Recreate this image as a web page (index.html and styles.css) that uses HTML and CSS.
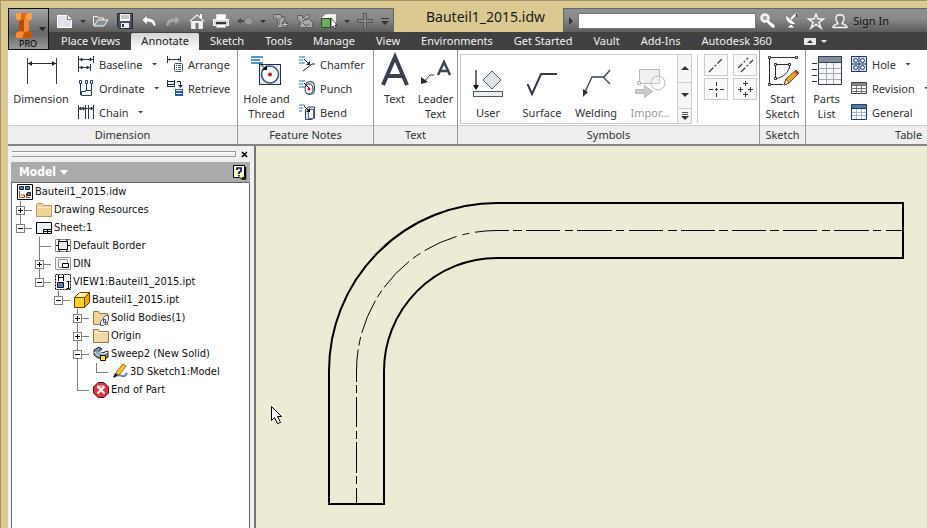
FILE: index.html
```html
<!DOCTYPE html>
<html lang="en">
<head>
<meta charset="utf-8">
<title>Bauteil1_2015.idw</title>
<link rel="stylesheet" href="styles.css">
</head>
<body>
<div class="window">
<header class="frame">
  <button class="app-button" aria-label="Application menu">
    <svg width="38" height="38" viewBox="0 0 38 38">
      <path d="M7 3h16v6l-3 2v10l3 2v5H7v-5l3-2V11L7 9z" fill="#dd6b18"/>
      <path d="M7 3h5v5l-1 3-4-2zM18 3h5v6l-4 2-3-3z" fill="#f7a14c"/>
      <path d="M10 11l5-2v12l-5 1z" fill="#b9480e"/><path d="M15 9l5 2v10l-5 1z" fill="#f08a35"/>
      <path d="M7 23l5-2 3 2-2 5H7z" fill="#f58b2d"/><path d="M15 23l4-2 4 2v5h-9z" fill="#c9540e"/>
      <path d="M30 17h7l-3.500 4z" fill="#1b2531"/>
      <text x="19" y="37" class="app-label">PRO</text>
    </svg>
  </button>
  <div class="title-row">
    <div class="quick" role="toolbar" aria-label="Quick access">
      <button aria-label="New"><svg width="16" height="16"><path d="M.5 2.500h10l4 4v8H.5z" fill="#dfe2ea" stroke="#fff"/><path d="M10.500 2.500v4h4" fill="#fff" stroke="#777"/></svg></button>
      <button class="drop" aria-label="New options"><svg width="4" height="16"><path d="M-1 7h6l-3 3z" fill="#333"/></svg></button>
      <button aria-label="Open"><svg width="16" height="16"><path d="M.5 12.500v-9h4l1 1.500h5v3" fill="#888" stroke="#eee"/><path d="M1 13l4-6h10l-4 6z" fill="#85909c" stroke="#f4f4f4"/></svg></button>
      <button aria-label="Save"><svg width="16" height="16"><path d="M.5.5h15v15h-13l-2-2z" fill="#46505f" stroke="#222b38"/><path d="M3 1h10v7H3z" fill="#f5f5f5"/><path d="M4 3h8M4 5h8" stroke="#999"/><path d="M4 10h8v5H4z" fill="#eee"/><path d="M5 11h2v3H5z" fill="#333"/></svg></button>
      <button aria-label="Undo"><svg width="16" height="16"><path d="M6 2v3c5 0 9 2 9 8h-3c0-3-2-4-6-4v3L1 7z" fill="#f8f8f8" stroke="#555" stroke-width=".5"/></svg></button>
      <button aria-label="Redo"><svg width="16" height="16"><path d="M10 2v3c-5 0-9 2-9 8h3c0-3 2-4 6-4v3l5-5z" fill="#aaa" stroke="#777" stroke-width=".5"/></svg></button>
      <button aria-label="Home"><svg width="16" height="16"><path d="M2.500 8v7.500h4V10h3v5.500h4V8" fill="#f2f2f4" stroke="#e8e8e8"/><path d="M0 8l8-7 8 7-1 1-7-6-7 6z" fill="#fff" stroke="#666" stroke-width=".4"/><path d="M11 1h2v4h-2z" fill="#fff"/><path d="M6.500 10h3v5h-3z" fill="#777"/></svg></button>
      <button aria-label="Print"><svg width="16" height="16"><path d="M3.500 1.500h9v5h-9z" fill="#fff" stroke="#ddd"/><path d="M.5 6.500h15v6H.5z" fill="#d5d7dc" stroke="#fff"/><path d="M3 9h10v2H3z" fill="#333"/><path d="M3.500 11.500h9v3h-9z" fill="#fff" stroke="#bbb"/></svg></button>
      <button aria-label="Return"><svg width="16" height="16"><path d="M0 8l4-3v2h4v2H4v2z" fill="#484848"/><circle cx="11.500" cy="8" r="4" fill="#999" stroke="#777"/></svg></button>
      <button class="drop" aria-label="Return options"><svg width="4" height="16"><path d="M-1 7h6l-3 3z" fill="#333"/></svg></button>
      <button aria-label="Update"><svg width="16" height="16" fill="#a8a8a8" stroke="#5f5f5f"><path d="M.5 1.500h7l1 2h3v4l3 2v5h-10v-7l-4-2z"/><path d="M2 4l4 3 5-4M6 12V8M8 10l4-3" fill="none"/><path d="M9 11.500h6M12 8.500v6" stroke="#555" stroke-width="3"/><path d="M9.500 11.500h5M12 9v5" stroke="#ccc"/></svg></button>
      <button aria-label="Update sheet"><svg width="16" height="16" fill="#a8a8a8" stroke="#5f5f5f"><path d="M.5 2.500h5v3l4-4 3 1-1 3 4 4v5H2.500v-7l-2-1z"/><path d="M3 12c1-4 4-5 8-6M11 6l-4 0M6 10l3 3 3-2" fill="none" stroke="#555"/></svg></button>
      <button aria-label="Select"><svg width="16" height="16"><path d="M.5 5.500l4-4h10v9l-4 4H.5z" fill="#fff" stroke="#e6e6e6"/><path d="M.5 5.500h9v9h-9z" fill="#73a967" stroke="#135d13"/><path d="M10 5v10l2-2 2 3 1-1-1-3h2z" fill="#fff" stroke="#222" stroke-width=".8"/></svg></button>
      <button class="drop" aria-label="Select options"><svg width="4" height="16"><path d="M-1 7h6l-3 3z" fill="#333"/></svg></button>
      <button aria-label="Add"><svg width="16" height="16"><path d="M6.500.5h3v6h6v3h-6v6h-3v-6h-6v-3h6z" fill="#888" stroke="#555"/></svg></button>
      <button class="more" aria-label="Customize"><svg width="8" height="16"><path d="M0 5.500h8" stroke="#333"/><path d="M0 8h8l-4 4z" fill="#333"/></svg></button>
    </div>
    <h1>Bauteil1_2015.idw</h1>
    <div class="info">
      <button class="drop" aria-label="Collapse search"><svg width="6" height="10"><path d="M1 1v8l4-4z" fill="#333"/></svg></button>
      <input type="text" aria-label="Search">
      <button aria-label="Search"><svg width="16" height="16"><path d="M6 5l9 7v3h-3L5 8z" fill="#fff" stroke="#555" stroke-width=".6"/><circle cx="5" cy="5" r="3.500" fill="#aaa" stroke="#f5f5f5" stroke-width="2.500"/></svg></button>
      <button aria-label="Communication Center"><svg width="16" height="16"><path d="M2 2l10 9c-4 2-12-2-10-9z" fill="#fff" stroke="#444" stroke-width=".5"/><path d="M7 6l5-5" stroke="#fff" stroke-width="2"/><path d="M12 1l1 3" stroke="#222"/><path d="M3 15l4-4 4 4z" fill="#fff" stroke="#333" stroke-width=".5"/></svg></button>
      <button aria-label="Favorites"><svg width="16" height="16"><path d="M8 1l2 5h5.500L11 9.500l2 5.500-5-3.500L3 15l2-5.500L.5 6H6z" fill="#85888c" stroke="#f4f4f4" stroke-width="1.500"/></svg></button>
      <button class="sign"><svg width="16" height="16"><path d="M1 14.500c0-3 3-3 5-4 0-1-2-2-2-5 0-5 8-5 8 0 0 3-2 4-2 5 2 1 5 1 5 4z" fill="#777b80" stroke="#f4f4f4" stroke-width="1.400"/></svg><span>Sign In</span></button>
    </div>
  </div>
  <nav class="tabs">
    <a href="#">Place Views</a><a href="#" class="active" aria-current="page">Annotate</a><a href="#">Sketch</a><a href="#">Tools</a><a href="#">Manage</a><a href="#">View</a><a href="#">Environments</a><a href="#">Get Started</a><a href="#">Vault</a><a href="#">Add-Ins</a><a href="#">Autodesk 360</a>
    <button aria-label="Minimize ribbon"><svg width="26" height="10"><rect x="1" y="2" width="12" height="7" rx="1" fill="#e8e8e8"/><path d="M4 7h6L7 4z" fill="#333"/><path d="M18 4h6l-3 3z" fill="#eee"/></svg></button>
  </nav>
</header>

<section class="ribbon">
  <section class="panel dimension">
    <div class="tools">
      <button class="big"><svg width="32" height="30"><path d="M2.500 2v26M31.500 2v26" stroke="#3c3c48"/><path d="M3 7.500h28" stroke="#26303c"/><path d="M3 7.500l4-2.500v5zM31 7.500l-4-2.500v5z" fill="#1b2531"/></svg><span>Dimension</span></button>
      <div class="stack">
        <button class="small"><svg width="16" height="16" stroke="#2d3a4b"><path d="M.5 0v16M15.500 0v7M12.500 8v7M1 3.500h14M1 11.500h11" fill="none"/><path d="M2 3.500l2-1.500v3zM14 3.500l-2-1.500v3zM2 11.500l2-1.500v3zM11 11.500l-2-1.500v3z" fill="#2d3a4b"/></svg><span>Baseline</span><i class="caret"></i></button>
        <button class="small"><svg width="16" height="16" fill="#fff" stroke="#1d3d6d"><path d="M2.500 4v11M8.500 4v6M13.500 4v6"/><path d="M1.500.5h2v3h-2zM7.500.5h2v3h-2zM12.500.5h2v3h-2zM3.500 15.500v-4h4v-1h6v5z"/></svg><span>Ordinate</span><i class="caret"></i></button>
        <button class="small"><svg width="16" height="16" stroke="#2d3a4b"><path d="M.5 1v14M7.500 1v14M10.500 1v14M15.500 1v14M1 4.500h14" fill="none"/><path d="M1 4.500l2-1.500v3zM7 4.500l-2-1.500v3zM15 4.500l-2-1.500v3z" fill="#2d3a4b"/></svg><span>Chain</span><i class="caret"></i></button>
      </div>
      <div class="stack two">
        <button class="small"><svg width="16" height="16"><path d="M.5 0v7M13.500 0v6M1 3.500h12" stroke="#2d3a4b" fill="none"/><path d="M1 3.500l2-1.500v3zM13 3.500l-2-1.500v3z" fill="#2d3a4b"/><rect x="7.500" y="7.500" width="8" height="8" rx="1" fill="#fff" stroke="#435062"/><path d="M9 9.500h1m1 0h3M9 11.500h1m1 0h3M9 13.500h1m1 0h3" stroke="#435062"/></svg><span>Arrange</span></button>
        <button class="small"><svg width="16" height="16"><path d="M.5 0v7M7.500 0v7M0 1.500h8M0 4.500h8M0 6.500h8" stroke="#1a315c"/><path d="M10 1.500h3.500V6" stroke="#1c2534" fill="none"/><path d="M11 5h5l-2.500 3z" fill="#1c2534"/><path d="M8 9h8v7H8z" fill="#2356c8"/><path d="M9 10.500h6M9 13.500h6" stroke="#fff"/></svg><span>Retrieve</span></button>
      </div>
    </div>
    <h2>Dimension</h2>
  </section>

  <section class="panel notes">
    <div class="tools">
      <button class="big"><svg width="32" height="30"><path d="M0 1h12M0 4h9M0 7h12" stroke="#1a76c9" stroke-width="1.500"/><rect x="8.500" y="8.500" width="21" height="20" fill="#e9edf5" stroke="#1d2c50"/><circle cx="19" cy="18.500" r="8.500" fill="#fff" stroke="#35507b" stroke-width="1.500"/><circle cx="19" cy="18.500" r="2" fill="#e00b12"/><path d="M8 7l7 6" stroke="#111"/><path d="M16 14h-5l5-5z" fill="#111"/></svg><span>Hole and<br>Thread</span></button>
      <div class="stack">
        <button class="small"><svg width="16" height="16"><path d="M0 1h6M0 4h4M0 7h6" stroke="#1a76c9"/><path d="M4 15l9-7h3M5 3l5 5" fill="none" stroke="#222d3c"/><path d="M11 9H7l4-4z" fill="#222"/></svg><span>Chamfer</span></button>
        <button class="small"><svg width="16" height="16"><rect x="6.500" y="1.500" width="9" height="13" rx="4" fill="#cbd0da" stroke="#3e4961"/><ellipse cx="10" cy="9" rx="4" ry="5" fill="#fff" stroke="#35425a"/><circle cx="10" cy="9" r="1.500" fill="#e00b12"/><path d="M0 1h6M0 4h4M0 7h6" stroke="#1a76c9"/><path d="M5 3l5 5" stroke="#111"/></svg><span>Punch</span></button>
        <button class="small"><svg width="16" height="16"><path d="M6.500 5.500l3-2.500h6v11l-3 1.500h-6z" fill="#dfe3eb" stroke="#30456d"/><path d="M9.500 5.500h5v9h-5z" fill="#fff" stroke="#52698e"/><path d="M0 1h6M0 4h4M0 7h3" stroke="#1a76c9"/><path d="M5 2l5 5" stroke="#111"/><path d="M11 8H7l4-4z" fill="#111"/></svg><span>Bend</span></button>
      </div>
    </div>
    <h2>Feature Notes</h2>
  </section>

  <section class="panel text">
    <div class="tools">
      <button class="big"><svg width="30" height="30"><path d="M3 29L15 1l12 28M7 20h16" fill="none" stroke="#3d4050" stroke-width="4"/></svg><span>Text</span></button>
      <button class="big"><svg width="30" height="30"><path d="M17 19L23 6l6 13M19 15h8" fill="none" stroke="#3d4550" stroke-width="2.500"/><path d="M3 26l6-7h4" fill="none" stroke="#2d3742"/><path d="M0 28v-7l7 5z" fill="#222b36"/></svg><span>Leader<br>Text</span></button>
    </div>
    <h2>Text</h2>
  </section>

  <section class="panel symbols">
    <div class="tools">
      <div class="gallery">
        <button><svg width="32" height="30"><path d="M4 1v16" stroke="#111" stroke-width="1.200"/><path d="M1 16h6l-3 5z" fill="#111"/><path d="M20 2l9 9-9 9-9-9z" fill="#dde1e8" stroke="#56606e"/><rect x="1.500" y="22.500" width="29" height="5" fill="#eceff2" stroke="#4c5966"/></svg><span>User</span></button>
        <button><svg width="32" height="30"><path d="M1 16h1l4 9L15 5h16" fill="none" stroke="#343a47" stroke-width="2"/></svg><span>Surface</span></button>
        <button><svg width="32" height="30"><path d="M5 23L12 8h12l6-7M23 8l7 7" fill="none" stroke="#3b444f" stroke-width="1.300"/><path d="M3 28v-8l5 3z" fill="#333"/></svg><span>Welding</span></button>
        <button class="muted" disabled><svg width="32" height="30" fill="#f1f1f1" stroke="#b8b8b8"><path d="M5.500.500h20v14h-20z"/><circle cx="24" cy="14" r="7" fill-opacity=".3"/><path d="M3.500 12.500h3v3h-3z"/><path d="M1.500 20.500h9v-4l8 6-8 6v-4h-9z" fill="#ccc"/></svg><span>Impor...</span></button>
        <div class="scroll"><button aria-label="Up"><svg width="8" height="6"><path d="M0 5h8L4 1z" fill="#333"/></svg></button><button aria-label="Down"><svg width="8" height="6"><path d="M0 1h8L4 5z" fill="#333"/></svg></button><button aria-label="Expand"><svg width="8" height="8"><path d="M1 .5h6M1 2.500h6" stroke="#555"/><path d="M0 4h8L4 8z" fill="#333"/></svg></button></div>
      </div>
      <div class="marks">
        <button aria-label="Centerline"><svg width="18" height="18"><path d="M2 16L16 2" stroke="#333a45" stroke-width="1.200" stroke-dasharray="6 2 2 2"/></svg></button>
        <button aria-label="Centerline Bisector"><svg width="18" height="18"><path d="M2 12L12 2M5 16L17 4" stroke="#333a45" stroke-width="1.200" stroke-dasharray="6 2 2 2"/></svg></button>
        <button aria-label="Center Mark"><svg width="18" height="18"><path d="M9.500 2v4m0 2v3m0 2v4M2 9.500h4m2 0h3m2 0h4" stroke="#333a45"/></svg></button>
        <button aria-label="Centered Pattern"><svg width="18" height="18"><path d="M9.500 1v5M7 3.500h5M9.500 12v5M7 14.500h5M4.500 7v5M2 9.500h5M14.500 7v5M12 9.500h5" stroke="#333a45"/></svg></button>
      </div>
    </div>
    <h2>Symbols</h2>
  </section>

  <section class="panel sketch">
    <div class="tools">
      <button class="big"><svg width="32" height="30"><path d="M2.500 1.500h26M2.500 1.500v27H16M8.500 8.500h14v4M8.500 8.500v14c8-1 13-6 14-12" fill="none" stroke="#29303a"/><path d="M1.500.500h2v2h-2zM28.500.500h2v2h-2zM1.500 27.500h2v2h-2zM7.500 7.500h2v2h-2zM21.500 7.500h2v2h-2zM7.500 21.500h2v2h-2z" fill="#fff" stroke="#29303a"/><path d="M17 29l2-6 10-9 3 3-10 10z" fill="#eba72a" stroke="#6b4b17"/><path d="M19 23l3 4-5 2z" fill="#f9e3bd" stroke="#333" stroke-width=".7"/><path d="M27 16l2-2 3 3-2 2z" fill="#b94b3d"/></svg><span>Start<br>Sketch</span></button>
    </div>
    <h2>Sketch</h2>
  </section>

  <section class="panel table">
    <div class="tools">
      <button class="big"><svg width="32" height="30"><path d="M1 7.500h5M1 13.500h5M1 19.500h5M1 25.500h5" stroke="#333"/><rect x="7.500" y=".5" width="23" height="28" fill="#f6f7f9" stroke="#3a4048"/><path d="M8 1h22v5H8z" fill="#7f8ea2"/><path d="M8 6.500h22" stroke="#3a4048"/><path d="M8 12.500h22M8 17.500h22M8 23.500h22M15.500 7v21M22.500 7v21" stroke="#a4aab2"/></svg><span>Parts<br>List</span></button>
      <div class="stack">
        <button class="small"><svg width="16" height="16" fill="#dce5f4" stroke="#173465"><path d="M.5.500h15v15H.5zM8 0v16M0 8h16"/><circle cx="4.500" cy="4.500" r="2" fill="#fff"/><circle cx="11.500" cy="4.500" r="2" fill="#fff"/><circle cx="4.500" cy="11.500" r="2" fill="#fff"/><circle cx="11.500" cy="11.500" r="2" fill="#fff"/></svg><span>Hole</span><i class="caret"></i></button>
        <button class="small"><svg width="16" height="16"><path d="M.5 2.500h15v11H.5z" fill="#fff" stroke="#444"/><path d="M1 3h14v2H1z" fill="#888"/><path d="M0 5.500h16M0 8.500h16M0 11.500h16M5.500 5v9M10.500 5v9" stroke="#777"/></svg><span>Revision</span><i class="caret"></i></button>
        <button class="small"><svg width="16" height="16"><path d="M.5.500h15v15H.5z" fill="#fff" stroke="#193f68"/><path d="M1 1h14v3H1z" fill="#5378a2"/><path d="M1 4.500h14" stroke="#193f68"/><path d="M1 8.500h14M1 11.500h14M5.500 5v10M10.500 5v10" stroke="#aab6c4"/></svg><span>General</span></button>
      </div>
    </div>
    <h2>Table</h2>
  </section>
</section>

<div class="workspace">
  <aside class="browser">
    <div class="grip"><i></i><button aria-label="Close"><svg width="7" height="7"><path d="M1 1l5 5M6 1L1 6" stroke="#000" stroke-width="1.700"/></svg></button></div>
    <div class="browser-head"><button class="model">Model<svg width="8" height="5"><path d="M0 0h8L4 5z" fill="#fff"/></svg></button>
      <button aria-label="Help"><svg width="14" height="15"><path d="M.5.500h11v12h-2v2l-3-2h-6z" fill="#ffffc0" stroke="#000"/><path d="M12.500 2v12H10" fill="none" stroke="#000" stroke-width="1.500"/><path d="M4 5V3h4v3L6 7.500V9M6 10v1.500" fill="none" stroke="#00109a" stroke-width="1.700"/></svg></button></div>
    <ul class="tree">
      <li><svg width="16" height="16"><path d="M.5.500h15v15H.5z" fill="#fff" stroke="#000"/><path d="M2.500 2.500h4v3h-4zM8.500 2.500h4v3h-4zM10.500 8.500h3v3h-3z" fill="#4388c8" stroke="#222"/><path d="M2.500 7v6.500h5V11h-4M9.500 9v4.500h4" fill="none" stroke="#aa4315"/></svg>Bauteil1_2015.idw</li>
      <li><b class="g tee"><button class="plus" aria-label="Expand"></button></b><svg width="16" height="16"><path d="M.5 2.500l1-1h5l1 2h8v11H.5z" fill="#f0d39a" stroke="#c39b60"/><path d="M1 5.500h14" stroke="#fbe9c5"/></svg>Drawing Resources</li>
      <li><b class="g end"><button class="minus" aria-label="Collapse"></button></b><svg width="16" height="16"><path d="M.5 2.500h15v11H.5z" fill="#eef2f5" stroke="#000"/><path d="M7.500 9.500h8M7.500 9.500v4M7.500 11.500h8M11.500 9.500v4" stroke="#000"/></svg>Sheet:1</li>
      <li><b class="g"></b><b class="g tee"></b><svg width="16" height="16"><path d="M.5 1.500h15v12H.5z" fill="#fff" stroke="#888"/><path d="M3.500 3.500h9v8h-9z" fill="#e2e8ec" stroke="#000"/><path d="M4 1v2M12 1v2M4 12v2M12 12v2M1 7.500h2M13 7.500h2" stroke="#000"/></svg>Default Border</li>
      <li><b class="g"></b><b class="g tee"><button class="plus" aria-label="Expand"></button></b><svg width="16" height="16"><path d="M.5 1.500h15v12H.5zM3.500 3.500h9v8h-9z" fill="#f4f6f7" stroke="#999"/><path d="M7.500 7.500h6v4h-6z" fill="#fff" stroke="#000"/></svg>DIN</li>
      <li><b class="g"></b><b class="g end"><button class="minus" aria-label="Collapse"></button></b><svg width="16" height="16"><path d="M.5.500h15v15H.5z" fill="#fff" stroke="#000" stroke-dasharray="2 1"/><path d="M3.500 1v6M8.500 1v6M3.500 3.500h5M11.500 7.500h3M11.500 14.500h3M13.500 7.500v7" stroke="#000"/><path d="M2.500 8.500h6v5h-6z" fill="#4389ca" stroke="#111"/></svg>VIEW1:Bauteil1_2015.ipt</li>
      <li><b class="g"></b><b class="g"></b><b class="g end"><button class="minus" aria-label="Collapse"></button></b><svg width="16" height="16" stroke="#7c3900"><path d="M.5 5.500l5-5h10l-5 5z" fill="#fff2a0"/><path d="M.5 5.500h10v10H.5z" fill="#ffd22c"/><path d="M10.500 5.500l5-5v10l-5 5z" fill="#e9a900"/></svg>Bauteil1_2015.ipt</li>
      <li><b class="g"></b><b class="g"></b><b class="g"></b><b class="g tee"><button class="plus" aria-label="Expand"></button></b><svg width="16" height="16"><path d="M.5 1.500h5l1 2h8v11H.5z" fill="#f1d39c" stroke="#9a7841"/><path d="M10.500 7.500l2-2h3v5l-2 2h-3zM7.500 11.500l2-2h3v4l-2 2h-3z" fill="#e9eef4" stroke="#4f5b6d"/></svg>Solid Bodies(1)</li>
      <li><b class="g"></b><b class="g"></b><b class="g"></b><b class="g tee"><button class="plus" aria-label="Expand"></button></b><svg width="16" height="16"><path d="M.5 1.500h5l1 2h9v11H.5z" fill="#f3dba9" stroke="#9a7841"/><path d="M1 4.500h14" stroke="#fff0cc"/></svg>Origin</li>
      <li><b class="g"></b><b class="g"></b><b class="g"></b><b class="g tee"><button class="minus" aria-label="Collapse"></button></b><svg width="16" height="16"><path d="M1 7V4l5-3 3 2-4 3 4 1 6-2v6l-3 2-7-1-4-3z" fill="#8193a9" stroke="#151b24"/><path d="M5 6l5 2 5-2M1 6l5 4" fill="none" stroke="#fff"/><path d="M7.500 9.500h5v5h-5z" fill="#ffed00" stroke="#111"/></svg>Sweep2 (New Solid)</li>
      <li><b class="g"></b><b class="g"></b><b class="g"></b><b class="g pass"></b><b class="g end"></b><svg width="16" height="16"><path d="M2 13c6-6 9 4 13-4" fill="none" stroke="#6784a9" stroke-width="2"/><path d="M3 12l2-5 6-7 3 2-6 8z" fill="#ffc22a" stroke="#a56b16"/><path d="M1 14l2-5 3 2z" fill="#111"/></svg>3D Sketch1:Model</li>
      <li><b class="g"></b><b class="g"></b><b class="g"></b><b class="g end"></b><svg width="16" height="16"><path d="M5 .5h6L15.500 5v6L11 15.500H5L.5 11V5z" fill="#df3445" stroke="#43171b"/><path d="M4 3h7v3H4z" fill="#f08c94"/><path d="M4.500 4.500l7 7M11.500 4.500l-7 7" stroke="#fff" stroke-width="2"/></svg>End of Part</li>
    </ul>
  </aside>
  <main class="canvas">
    <svg viewBox="256 146 671 382" preserveAspectRatio="xMinYMin meet" role="img" aria-label="Bent pipe, side view">
      <g fill="none" stroke="#000">
        <path stroke-width="2" d="M497 203H903V258H497A113 113 0 0 0 384 371V504H329V371A168 168 0 0 1 497 203"/>
        <path d="M902 230.500H497" stroke-dasharray="16 5 8 4 35 4 8 5 34 4 9 4 34 4 9 4 34 4 9 5 34 5 8 4 35 4 8 5 34 4 9 4 14"/>
        <path d="M497 230.500A140.500 140.500 0 0 0 356.500 371" stroke-dasharray="22 6 7 6 35 5 9 5 36 4 8 4 35 4 9 4 22"/>
        <path d="M356.500 371V503" stroke-dasharray="11 3 8 4 30 4 8 3 31 3 8 4 15"/>
      </g>
      <path d="M271.500 406.500v14l3-3 3 6 3-1-3-6h4z" fill="#fff" stroke="#000"/>
    </svg>
  </main>
</div>
</div>
</body>
</html>
```
FILE: styles.css
```css
* { box-sizing: border-box; }
body { margin: 0; font: 11px/15px "Noto Sans", "Open Sans", sans-serif; color: #333; }
button { font: inherit; color: inherit; background: none; border: 0; padding: 0; margin: 0; }
svg { display: block; flex: none; overflow: visible; }
h1, h2, ul { margin: 0; padding: 0; font-weight: 400; }
.window { height: 100vh; display: flex; flex-direction: column; padding-left: 8px; background: #dac990; border-top: 1px solid #a29265; overflow: hidden; box-shadow: inset 1px 0 #a29265; }

.frame { display: grid; grid-template-columns: 41px minmax(0, 1fr); grid-template-rows: 31px 18px; }
.app-button { grid-row: 1 / 3; margin-top: 7px; border: 1px solid #111; background: linear-gradient(#a5a5a5, #666 60%, #999); }
.app-label { font: 9px "Noto Sans", sans-serif; text-anchor: middle; fill: #000; }
.title-row { display: flex; min-width: 0; }
.quick, .info { display: flex; align-items: center; margin-top: 7px; border-top: 1px solid #666; background: linear-gradient(#8f8f8f, #8a8a8a 40%, #5c5c5c); }
.quick { gap: 8px; padding: 0 4px 0 8px; border-right: 1px solid #666; }
h1 { flex: none; padding: 4px 18px 0 32px; font-size: 14px; line-height: 24px; color: #1a1a1a; }
.info { flex: 1; min-width: 0; gap: 4px; padding: 0 38px 0 4px; border-left: 1px solid #666; }
.info input { flex: 1; min-width: 0; height: 16px; border: 1px solid #777; border-radius: 0; background: #fff; padding: 0 4px; }
.info button + button { margin-left: 4px; }
.sign { display: flex; align-items: center; gap: 5px; color: #111; }
.tabs { display: flex; gap: 1px; background: #414141; color: #f2f2f2; line-height: 17px; white-space: nowrap; padding-left: 2px; }
.tabs a { color: inherit; text-decoration: none; padding: 0 10px; }
.tabs .active { color: #222; background: linear-gradient(#d4d4d4, #fff); border-radius: 2px 2px 0 0; margin-top: 1px; line-height: 16px; }
.tabs button { margin-left: 20px; }

.ribbon { display: flex; background: #fff; border-bottom: 2px solid #858585; overflow: hidden; }
.panel { flex: none; display: flex; flex-direction: column; border-right: 1px solid #999; }
.panel h2 { height: 19px; line-height: 17px; font-size: 11px; text-align: center; background: #eee; border-top: 1px solid #ccc; }
.tools { display: flex; height: 75px; padding-top: 2px; }
.big { display: flex; flex-direction: column; align-items: center; justify-content: flex-start; gap: 5px; padding-top: 4px; white-space: nowrap; }
.stack { display: grid; grid-template-rows: repeat(3, 24px); }
.small { display: flex; align-items: center; gap: 5px; white-space: nowrap; }
.caret { width: 6px; height: 3px; margin-left: 4px; background: #444; clip-path: polygon(0 0, 100% 0, 50% 100%); }
.dimension { width: 230px; }
.dimension .big { width: 66px; margin-right: 4px; }
.dimension .stack { width: 89px; }
.dimension .two { width: 68px; }
.notes { width: 136px; }
.notes .big { width: 57px; margin-right: 4px; }
.text { width: 84px; }
.text .big { width: 41px; }
.symbols { width: 302px; }
.gallery { display: flex; width: 232px; height: 70px; margin: 2px 5px 0 2px; border: 1px solid #ccc; }
.gallery > button { flex: 1; display: flex; flex-direction: column; align-items: center; gap: 6px; padding-top: 14px; }
.gallery .muted { color: #999; }
.scroll { width: 14px; display: grid; grid-template-rows: 1fr 1fr 15px; border-left: 1px solid #ccc; background: #f5f5f5; }
.scroll button { display: grid; place-items: center; }
.scroll button + button { border-top: 1px solid #ccc; }
.marks { display: grid; grid-template: 22px 22px / 24px 24px; gap: 2px 5px; align-content: start; margin: 2px 0; padding-left: 6px; border-left: 1px solid #ccc; }
.marks button { display: grid; place-items: center; border: 1px solid #ccc; background: #f9f9f9; }
.sketch { width: 46px; }
.sketch .big { width: 45px; }
.table { width: 206px; }
.table .big { width: 41px; margin-right: 4px; }

.workspace { flex: 1; min-height: 0; display: flex; }
.browser { flex: 0 0 248px; display: flex; flex-direction: column; padding: 0 4px 0 3px; background: #f0f0f0; border-right: 2px solid #777; font: 11px/18px "DejaVu Sans Condensed", "DejaVu Sans", sans-serif; color: #111; }
.grip { display: flex; align-items: center; gap: 5px; height: 16px; padding: 0 2px 0 1px; }
.grip i { flex: 1; height: 6px; border: 1px solid #999; border-left: 0; box-shadow: inset 0 1px #fff; }
.browser-head { display: flex; align-items: center; justify-content: space-between; height: 20px; padding: 0 3px 0 8px; background: #ababab; }
.model { display: flex; align-items: center; gap: 4px; color: #fff; font-weight: 700; font-size: 12px; }
.tree { flex: 1; list-style: none; background: #fff; border: 1px solid #666; border-bottom: 0; padding-left: 4px; white-space: nowrap; }
.tree li { display: flex; align-items: center; height: 18px; }
.tree li > svg { margin: 0 2px 0 1px; }
.g { flex: none; width: 19px; height: 18px; display: flex; align-items: center; background-repeat: no-repeat; }
.tee { background-image: linear-gradient(#808080, #808080), linear-gradient(#808080, #808080); background-size: 1px 18px, 12px 1px; background-position: 4px 0, 4px 9px; }
.end { background-image: linear-gradient(#808080, #808080), linear-gradient(#808080, #808080); background-size: 1px 9px, 12px 1px; background-position: 4px 0, 4px 9px; }
.pass { background-image: linear-gradient(#808080, #808080); background-size: 1px 18px; background-position: 4px 0; }
.plus, .minus { width: 9px; height: 9px; border: 1px solid #808080; background: linear-gradient(#000, #000) center / 5px 1px no-repeat, #fff; }
.plus { background: linear-gradient(#000, #000) center / 5px 1px no-repeat, linear-gradient(#000, #000) center / 1px 5px no-repeat, #fff; }
.canvas { flex: 1; min-width: 0; background: #ececd6; overflow: hidden; }
.canvas svg { width: 100%; height: auto; }
```
